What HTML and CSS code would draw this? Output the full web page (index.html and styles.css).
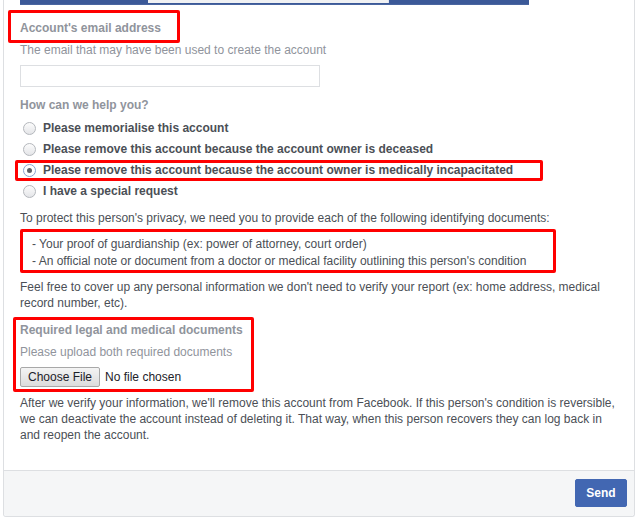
FILE: index.html
```html
<!DOCTYPE html>
<html lang="en">
<head>
    <meta charset="UTF-8">
    <title>Medically incapacitated account</title>
    <link rel="stylesheet" href="styles.css">
</head>
<body>
<div class="card">
    <div class="topbar">
        <div class="logo"><span>facebook</span></div>
        <div class="search"></div>
        <div class="rest"></div>
    </div>

    <div class="content">
        <div class="label first">Account's email address</div>
        <div class="hint">The email that may have been used to create the account</div>
        <input type="text" class="email">

        <div class="label question">How can we help you?</div>
        <div class="options">
            <label class="option"><input type="radio" name="help"> Please memorialise this account</label>
            <label class="option"><input type="radio" name="help"> Please remove this account because the account owner is deceased</label>
            <label class="option"><input type="radio" name="help" checked> Please remove this account because the account owner is medically incapacitated</label>
            <label class="option"><input type="radio" name="help"> I have a special request</label>
        </div>

        <p class="text protect">To protect this person's privacy, we need you to provide each of the following identifying documents:</p>
        <ul class="docs">
            <li>- Your proof of guardianship (ex: power of attorney, court order)</li>
            <li>- An official note or document from a doctor or medical facility outlining this person's condition</li>
        </ul>
        <p class="text cover">Feel free to cover up any personal information we don't need to verify your report (ex: home address, medical record number, etc).</p>

        <div class="label required">Required legal and medical documents</div>
        <div class="hint">Please upload both required documents</div>
        <input type="file" class="upload">

        <p class="text after">After we verify your information, we'll remove this account from Facebook. If this person's condition is reversible, we can deactivate the account instead of deleting it. That way, when this person recovers they can log back in and reopen the account.</p>
    </div>

    <div class="footer">
        <button class="send">Send</button>
    </div>
</div>

<!-- red annotation boxes -->
<div class="mark mark-email"></div>
<div class="mark mark-option"></div>
<div class="mark mark-docs"></div>
<div class="mark mark-upload"></div>
</body>
</html>
```

FILE: styles.css
```css
body{
    margin: 0;
    font-family: "Liberation Sans", Arial, sans-serif;
    font-size: 12px;
    color: #4b4f56;
    background: #fff;
    position: relative;
    height: 517px;
    overflow: hidden;
}

.card{
    margin-left: 3px;
    width: 632px;
    box-sizing: border-box;
    border: 1px solid #dddfe2;
    border-top: none;
    border-radius: 0 0 3px 3px;
}

.topbar{
    display: flex;
    margin-left: 16px;
    width: 509px;
    height: 5px;
    overflow: hidden;
    background: #3b5998;
    border-bottom: 1px solid #4a66a0;
    box-sizing: border-box;
}
.logo{
    flex: 0 0 128px;
}
.logo span{
    display: block;
    margin: -17px 0 0 6px;
    color: #fff;
    font-weight: bold;
    font-size: 20px;
    line-height: 20px;
}
.search{
    flex: 0 0 240px;
    height: 3px;
    background: #f0f1f3;
    border-right: 1px solid #dfe3ee;
}
.rest{
    flex: 1;
}

.content{
    padding: 0 16px 27px 16px;
}

.label{
    font-weight: bold;
    color: #90949c;
    line-height: 16px;
}
.first{
    margin-top: 15px;
}
.hint{
    color: #90949c;
    line-height: 16px;
    margin-top: 6px;
}
.email{
    display: block;
    margin: 7px 0 0 0;
    width: 300px;
    height: 22px;
    box-sizing: border-box;
    border: 1px solid #dddfe2;
    padding: 3px;
    font-family: inherit;
    font-size: 12px;
}

.question{
    margin-top: 10px;
}
.options{
    margin-top: 5px;
}
.option{
    display: flex;
    align-items: center;
    height: 21px;
    line-height: 21px;
    font-weight: bold;
    color: #4b4f56;
}
.option input{
    appearance: none;
    -webkit-appearance: none;
    width: 13px;
    height: 13px;
    margin: 0 7px 0 3px;
    border: 1px solid #b4b7bc;
    border-radius: 50%;
    background: linear-gradient(#fcfcfc, #e4e5e8);
    box-sizing: border-box;
    display: flex;
    align-items: center;
    justify-content: center;
}
.option input:checked{
    border-color: #8aa3d0;
    background: #fff;
}
.option input:checked::after{
    content: "";
    width: 5px;
    height: 5px;
    border-radius: 50%;
    background: #5d6168;
}

.text{
    margin: 0;
    line-height: 16px;
}
.protect{
    margin-top: 8px;
}
.docs{
    list-style: none;
    margin: 10px 0 0 0;
    padding: 0 0 0 12px;
    line-height: 17px;
}
.cover{
    margin-top: 9px;
}
.required{
    margin-top: 11px;
}
.upload{
    display: block;
    margin-top: 7px;
    font-family: inherit;
    font-size: 12px;
    color: #1d2129;
    height: 20px;
}
.upload::file-selector-button{
    font-family: inherit;
    font-size: 12px;
    color: #1d2129;
    height: 20px;
    padding: 0 7px;
    margin: 0 5px 0 0;
    border: 1px solid #a8a8a8;
    border-radius: 2px;
    background: linear-gradient(#f4f4f4, #dcdcdc);
}
.after{
    margin-top: 8px;
}

.footer{
    display: flex;
    justify-content: flex-end;
    background: #f5f6f7;
    border-top: 1px solid #dddfe2;
    padding: 8px 7px 9px 0;
    border-radius: 0 0 3px 3px;
}
.send{
    width: 52px;
    height: 28px;
    background: #4267b2;
    border: 1px solid #4267b2;
    border-radius: 2px;
    color: #fff;
    font-family: inherit;
    font-weight: bold;
    font-size: 12px;
}

.mark{
    position: absolute;
    border: 3px solid #ff0000;
    border-radius: 2px;
    box-sizing: border-box;
}
.mark-email{
    left: 8px;
    top: 10px;
    width: 172px;
    height: 33px;
}
.mark-option{
    left: 15px;
    top: 160px;
    width: 528px;
    height: 21px;
}
.mark-docs{
    left: 20px;
    top: 229px;
    width: 536px;
    height: 44px;
}
.mark-upload{
    left: 13px;
    top: 317px;
    width: 241px;
    height: 75px;
}
```
